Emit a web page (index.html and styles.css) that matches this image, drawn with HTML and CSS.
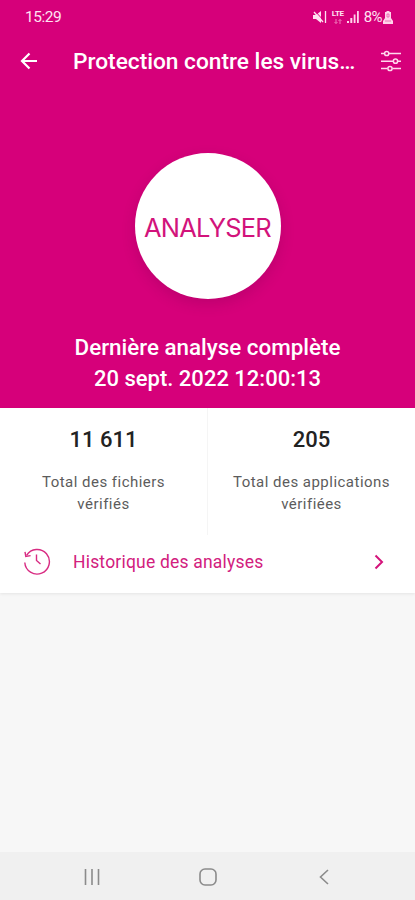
FILE: index.html
```html
<!DOCTYPE html>
<html lang="fr">
<head>
<meta charset="utf-8">
<title>Protection contre les virus</title>
<link rel="stylesheet" href="styles.css">
</head>
<body>
<div class="screen">
  <section class="hero">
    <div class="status">
      <span class="time">15:29</span>
      <span class="indicators">
        <svg class="mute" width="14" height="14" viewBox="0 0 14 14"><path d="M0 5h3l5-4v12L3 9H0z" fill="#ffe3f2"/><path d="M1 0l11 12" stroke="#d6007a" stroke-width="1"/><path d="M1 2l9 10M12.500 1v12" stroke="#ffe3f2" stroke-width="1.300" fill="none"/></svg>
        <span class="network">LTE<svg width="8" height="5" viewBox="0 0 8 5"><path d="M2 0v4.500M.5 3L2 4.500 3.500 3M6 5V.5M4.500 2L6 .5 7.500 2" fill="none" stroke="#f07abb" stroke-width="1"/></svg></span>
        <svg class="signal" width="12" height="12" viewBox="0 0 12 12" fill="#ffd3ea"><path d="M0 10h2v2H0zM3.300 7h2v5h-2zM6.700 3.500h1.800V12H6.700zM10 0h1.800v12H10z"/></svg>
        <span class="percent">8%</span>
        <svg class="battery" width="10" height="13" viewBox="0 0 10 13"><path d="M3.500 0h3v1H8v6l2 3v3H0v-3l2-3V1h1.500z" fill="#ffd3ea"/><path d="M4 3h2v3H4zM2 10h6" stroke="#e95bac" stroke-width=".8" fill="none"/></svg>
      </span>
    </div>
    <header class="appbar">
      <svg class="back" width="18" height="18" viewBox="0 0 18 18"><path d="M17 9H2M9.500 1.500L2 9l7.500 7.500" fill="none" stroke="#fff" stroke-width="2.200"/></svg>
      <h1>Protection contre les virus…</h1>
      <svg class="filters" width="20" height="22" viewBox="0 0 20 22" fill="none" stroke="#ffd9ed" stroke-width="1.5"><path d="M0 3.500h3.500M8 3.500h12M0 11.200h12M17 11.200h3M0 18.500h6.500M11.500 18.500H20"/><circle cx="5.700" cy="3.500" r="2.100"/><circle cx="14.500" cy="11.200" r="2.100"/><circle cx="9" cy="18.500" r="2.100"/></svg>
    </header>
    <button class="scan"><span>ANALYSER</span></button>
    <div class="last"><p class="label">Dernière analyse complète</p><p class="date">20 sept. 2022 12:00:13</p></div>
  </section>
  <section class="card">
    <div class="stats">
      <div class="stat"><strong>11 611</strong><p>Total des fichiers<br>vérifiés</p></div>
      <div class="stat"><strong>205</strong><p>Total des applications<br>vérifiées</p></div>
    </div>
    <div class="history">
      <svg class="clock" width="28" height="28" viewBox="0 0 28 28" fill="none" stroke="#d82b82" stroke-width="1.400"><path d="M3.600 7.300A12.300 12.300 0 1 1 1.800 14.500"/><path d="M2 3.800l.8 4.600 4.800-.8M13.500 6.500v6l4 3.500"/></svg>
      <span>Historique des analyses</span>
      <svg class="chevron" width="10" height="16" viewBox="0 0 10 16"><path d="M1.500 1.500L8 8l-6.500 6.500" fill="none" stroke="#d4147b" stroke-width="2"/></svg>
    </div>
  </section>
  <nav class="nav">
    <svg width="16" height="18" viewBox="0 0 16 18"><path d="M1.500 1v16M8 1v16M14.500 1v16" stroke="#8b8b8b" stroke-width="1.600"/></svg>
    <svg class="home" width="18" height="18" viewBox="0 0 18 18"><rect x="1" y="1" width="16" height="16" rx="5" fill="none" stroke="#8b8b8b" stroke-width="1.600"/></svg>
    <svg width="10" height="16" viewBox="0 0 10 16"><path d="M9 1L1.500 8 9 15" fill="none" stroke="#8b8b8b" stroke-width="1.600"/></svg>
  </nav>
</div>
</body>
</html>
```

FILE: styles.css
```css
* { box-sizing: border-box; }
body { margin: 0; font-family: Roboto, "Liberation Sans", sans-serif; }
p, h1 { margin: 0; }
svg { display: block; flex: none; }
.screen { width: 415px; height: 900px; background: #f7f7f7; display: flex; flex-direction: column; overflow: hidden; }
.hero { height: 408px; background: #d6007a; color: #fff; flex: none; }
.status { height: 34px; display: flex; justify-content: space-between; align-items: center; padding: 0 22px 0 25px; }
.time { font-size: 15.5px; letter-spacing: -.5px; color: #ffe3f2; }
.indicators { display: flex; align-items: center; color: #ffe3f2; }
.network { width: 14px; margin-left: 4px; display: flex; flex-direction: column; align-items: center; gap: 1px; font-size: 8px; line-height: 8px; font-weight: 700; letter-spacing: -.3px; }
.signal { margin-left: 2px; }
.percent { font-size: 15px; letter-spacing: -.6px; margin-left: 5px; }
.battery { margin-left: 1px; }
.appbar { height: 54px; display: flex; align-items: center; padding: 0 14px 0 20px; }
h1 { font-size: 22.7px; font-weight: 500; line-height: 30px; margin-left: 35px; padding-top: 1px; width: 308px; white-space: nowrap; }
.scan { display: flex; align-items: center; justify-content: center; width: 146px; height: 146px; margin: 65px auto 0; padding: 0; border: 0; border-radius: 50%; background: #fff; color: #d2137b; font: 400 25.5px/32px Inter, sans-serif; letter-spacing: -.8px; box-shadow: 0 5px 14px rgba(80, 0, 60, .18); }
.scan span { padding-top: 3px; }
.last { margin-top: 33px; text-align: center; font-size: 22px; line-height: 31px; font-weight: 500; }
.label { font-size: 22.4px; }
.card { height: 185px; flex: none; background: #fff; box-shadow: 0 1px 3px rgba(0, 0, 0, .08); }
.stats { height: 127px; display: flex; }
.stat { flex: 1; text-align: center; padding-top: 18px; }
.stat + .stat { border-left: 1px solid #f5f5f5; }
.stat strong { display: block; font-size: 22px; line-height: 28px; font-weight: 500; color: #222; }
.stat p { margin-top: 17px; font-size: 15px; line-height: 22px; letter-spacing: .48px; color: #5c5c5c; white-space: nowrap; }
.history { height: 54px; display: flex; align-items: center; padding: 0 31px 0 23px; color: #d2207e; }
.history span { flex: 1; margin-left: 22px; font-size: 17.5px; letter-spacing: .2px; }
.nav { height: 48px; margin-top: auto; background: #f0f0f0; display: flex; align-items: center; justify-content: space-between; padding: 2px 86px 0 84px; }
.home { margin-right: 4px; }
```
